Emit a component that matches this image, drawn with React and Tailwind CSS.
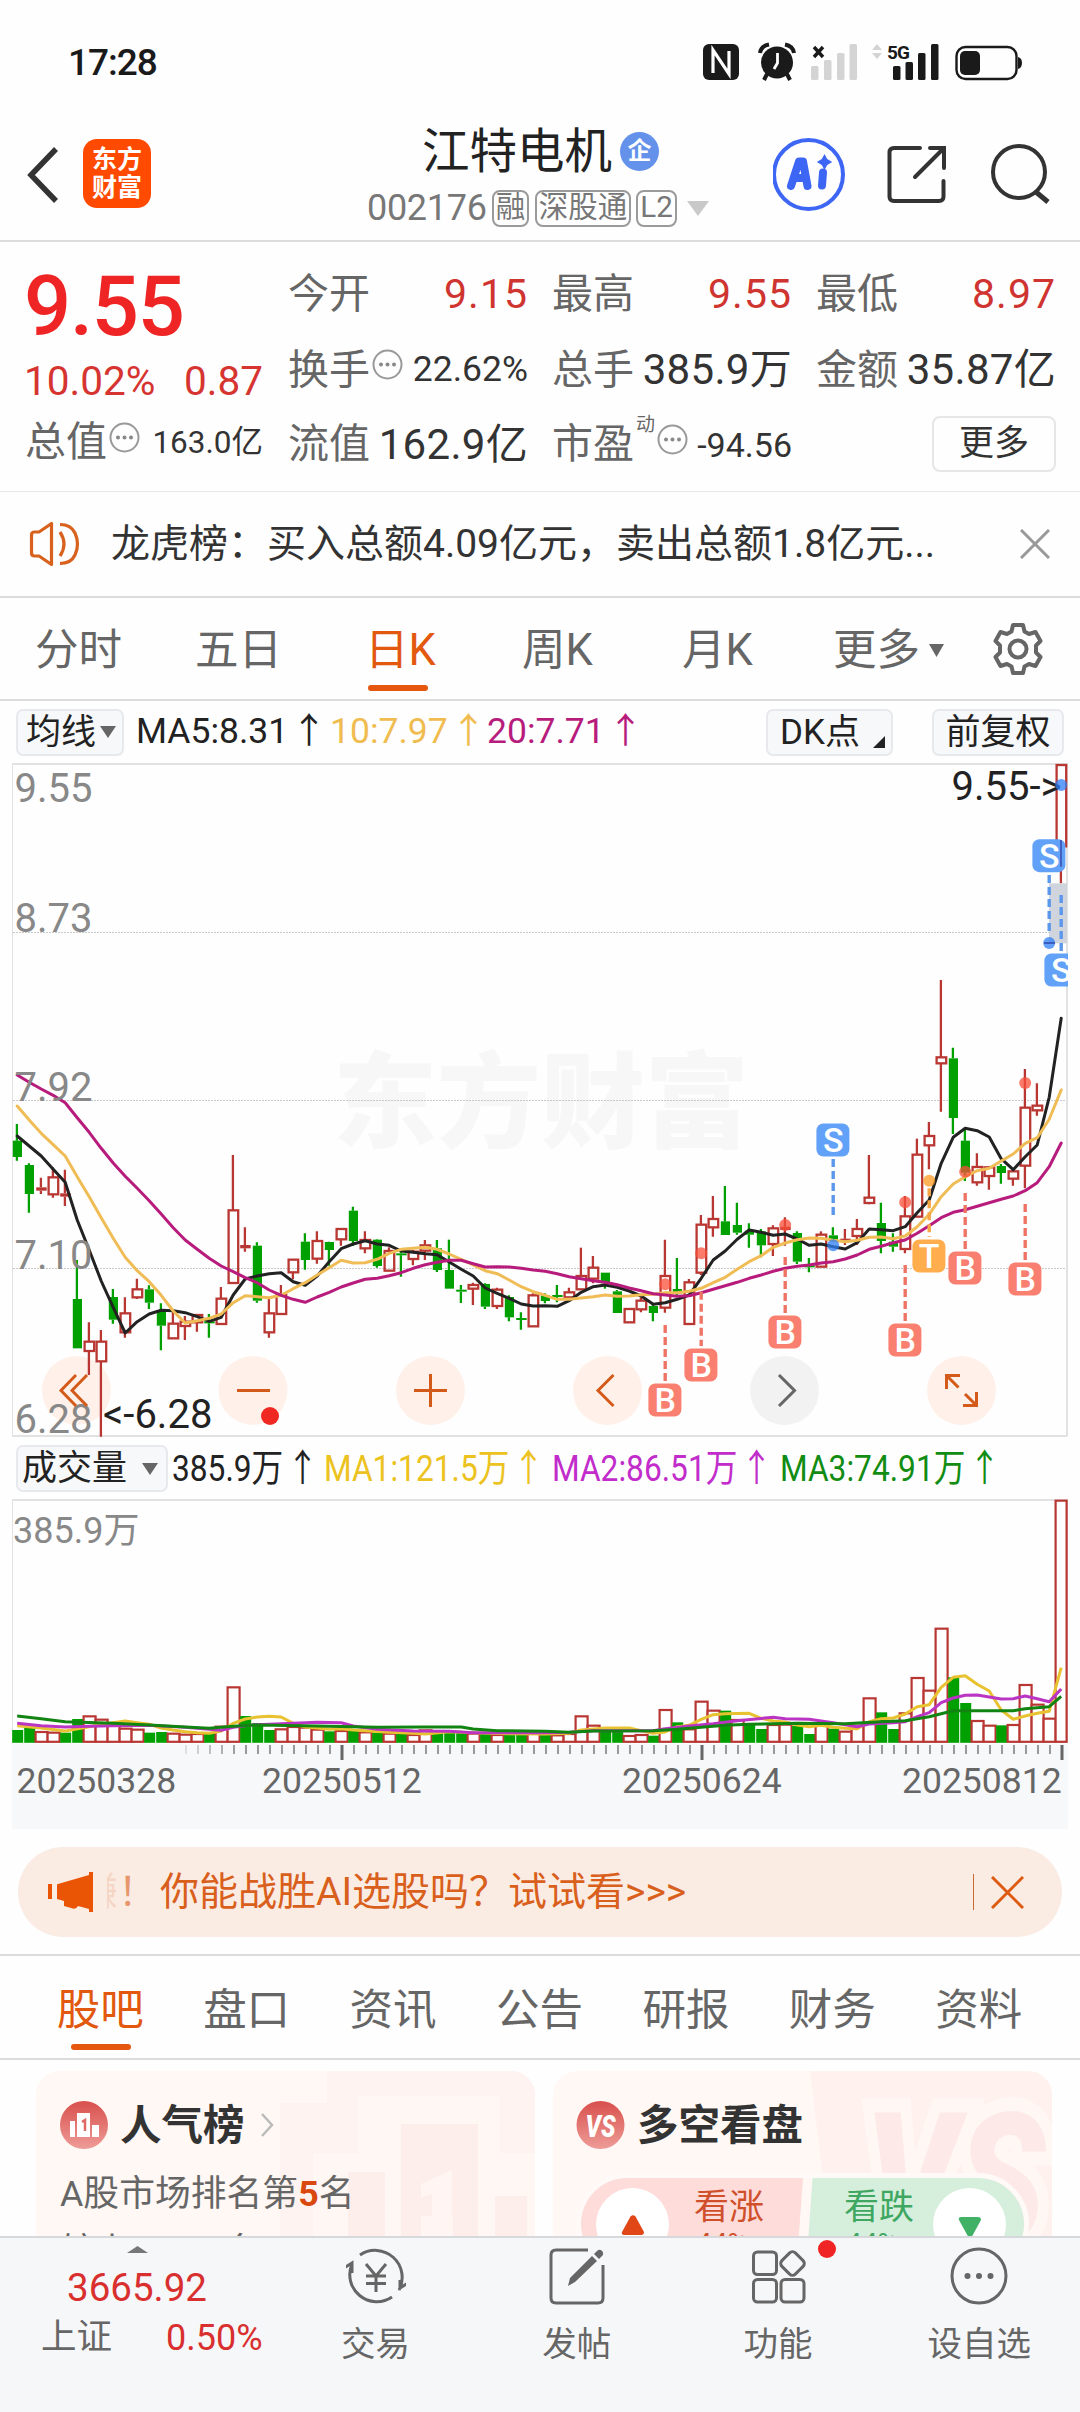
import React from "react";

const STEP = 12;
const X0 = 17.2;
const px = (i) => X0 + STEP * i;

// [kind, high, bodyTop, bodyBottom, low], values in thirds of a pixel
const CANDLES = [
  ["g",192,242,291,302],["g",310,315,402,458],["r",353,382,392,402],["r",322,352,403,413],["r",329,400,410,438],
  ["g",600,717,865,865],["r",787,845,873,945],["r",810,845,904,1130],["g",687,711,779,791],["r",712,760,817,833],
  ["r",656,688,712,717],["g",676,688,728,747],["g",730,750,797,871],["r",756,791,835,835],["r",768,785,798,840],
  ["r",762,765,787,815],["g",762,784,790,833],["r",681,716,792,792],["r",285,451,669,669],["r",502,555,565,575],
  ["g",547,557,722,728],["r",717,760,817,833],["r",675,705,762,762],["r",597,599,637,658],["g",520,545,600,629],
  ["r",514,543,596,611],["g",545,546,570,617],["r",505,507,538,557],["g",440,452,543,558],["r",514,540,565,580],
  ["g",538,539,618,623],["r",562,573,632,632],["g",568,580,586,650],["r",570,575,597,616],["r",540,556,572,600],
  ["g",540,565,630,636],["g",539,630,686,686],["g",675,689,695,729],["r",668,675,686,735],["g",670,672,740,747],
  ["r",683,689,738,747],["g",706,711,772,784],["g",757,774,780,809],["r",700,706,799,799],["g",700,706,723,730],
  ["g",675,705,711,727],["r",683,697,712,718],["r",563,648,688,688],["r",588,623,656,670],["g",638,638,670,686],
  ["g",690,694,759,759],["r",745,747,787,787],["r",712,722,748,757],["g",735,738,759,784],["r",539,648,743,758],
  ["g",594,687,700,706],["r",657,667,792,792],["r",465,494,638,645],["r",408,477,502,530],["g",378,484,525,525],
  ["g",428,495,518,524],["g",490,512,524,563],["g",507,514,556,592],["r",496,505,552,588],["r",472,500,510,557],
  ["g",514,519,605,612],["g",594,616,622,637],["r",514,524,620,620],["g",502,526,538,545],["r",507,536,542,555],
  ["r",477,507,528,555],["r",285,413,429,433],["g",428,489,543,580],["g",520,545,560,575],["r",408,469,567,580],
  ["r",236,284,470,470],["r",186,228,256,328],["r",-240,-8,10,155],["g",-37,-5,174,222],["g",210,242,338,363],
  ["r",280,321,367,377],["r",318,322,348,389],["g",312,318,339,371],["r",325,334,356,377],["r",27,143,317,385],
  ["r",70,137,151,167],null,["r",-885,-885,-641,-530],
];

const MA5 = [228,258,288,328,367,480,570,663,742,819,785,762,751,752,758,770,784,772,705,657,648,641,638,665,676,648,605,566,552,542,552,556,573,577,581,584,606,628,648,684,700,715,732,738,737,739,722,697,680,675,682,693,708,733,728,718,705,655,600,573,538,510,517,526,522,537,556,552,560,567,548,507,509,512,500,458,420,310,232,205,212,231,296,329,290,255,112,-125];
const MA10 = [138,180,220,254,288,350,410,473,535,592,632,665,706,753,789,782,775,762,728,707,710,713,706,686,668,645,623,601,609,608,598,580,568,565,562,568,582,598,615,632,641,660,680,695,706,718,718,714,710,705,709,708,704,703,698,698,694,685,668,652,628,605,587,562,549,539,534,535,541,545,541,532,531,536,528,500,463,410,372,350,332,325,303,282,250,233,178,90];
const MA20 = [45,67,87,106,128,173,217,265,309,349,385,422,462,503,540,568,595,618,635,653,668,690,706,718,727,711,697,681,669,658,655,647,638,625,614,607,601,601,611,621,620,621,625,630,634,641,650,656,662,667,674,684,692,701,705,709,707,698,688,677,667,655,645,634,625,619,615,609,605,597,585,568,559,548,540,520,497,473,457,449,439,428,418,408,392,368,320,249];

const VOL_TOP = [870,864,876,878,878,837,829,839,855,866,869,878,876,881,884,882,878,860,742,828,849,870,868,861,863,869,874,873,873,877,878,881,882,885,871,877,870,877,881,880,885,884,884,881,885,886,882,829,857,875,876,888,885,887,810,847,868,785,812,812,840,851,867,855,854,858,882,850,866,875,850,775,817,867,820,714,752,566,712,789,843,857,856,855,735,794,836,182];
// Bar colours, ten trading days to a group
const VOL_KIND = [
  "ggrrggrrrr",
  "rggrrrgrrg",
  "ggrrrrgrgr",
  "grgrrgggrg",
  "rggrgrrrrg",
  "grrgrgrrrg",
  "rggrrggrgr",
  "rrggrrrrgg",
  "rrgrrrrr",
].join("");

const V_YELLOW = [[0,857],[2,864],[4,873],[6,860],[7,853],[8,848],[9,843],[10,848],[11,853],[12,864],[13,870],[14,875],[15,878],[16,880],[17,873],[18,850],[19,837],[20,831],[21,829],[22,831],[23,850],[24,861],[25,864],[26,868],[27,866],[28,870],[29,872],[31,877],[33,880],[34,882],[36,875],[38,878],[41,881],[44,882],[46,880],[47,870],[49,864],[51,864],[52,872],[53,880],[54,876],[55,860],[56,856],[57,838],[58,824],[59,821],[61,820],[62,835],[63,843],[64,846],[65,855],[66,860],[67,856],[68,862],[69,865],[70,866],[71,845],[72,836],[73,834],[74,822],[75,800],[76,794],[77,742],[78,712],[79,707],[80,733],[81,753],[82,810],[83,838],[84,828],[85,820],[86,814],[87,683]];
const V_PURPLE = [[0,850],[2,857],[4,861],[6,859],[8,857],[11,856],[14,862],[16,868],[17,871],[18,862],[19,857],[20,854],[23,850],[25,847],[27,848],[28,858],[30,868],[33,873],[36,874],[38,878],[44,878],[46,877],[48,872],[51,872],[53,872],[54,866],[56,858],[58,851],[60,842],[63,832],[64,836],[66,838],[68,848],[70,860],[71,852],[73,848],[74,845],[75,830],[76,818],[77,788],[78,774],[79,766],[80,765],[81,771],[82,777],[83,776],[84,768],[85,776],[86,785],[87,747]];
const V_GREEN = [[0,828],[2,836],[4,845],[8,850],[11,855],[14,861],[16,865],[18,859],[20,855],[25,858],[30,862],[34,861],[37,861],[38,867],[40,872],[44,874],[46,877],[48,873],[53,872],[55,868],[57,862],[59,856],[61,853],[65,850],[69,851],[72,845],[74,842],[76,830],[78,812],[83,812],[84,806],[86,800],[87,769]];

// [index, letter, tag centre, dash start, dash end, dot, colour]
const TAGS = [
  [54,"B",1020,795,963,673,"#f97f70","#ee7566"],
  [57,"B",915,695,858,580,"#f97f70","#ee7566"],
  [64,"B",816,591,759,495,"#f97f70","#ee7566"],
  [74,"B",840,615,783,427,"#f97f70","#ee7566"],
  [76,"T",588,385,531,362,"#ffad4d","#f5a545"],
  [79,"B",624,399,567,335,"#f97f70","#ee7566"],
  [84,"B",657,432,600,69,"#f97f70","#ee7566"],
  [68,"S",240,297,465,556,"#62a1f8","#5b97ea"],
  [86,"S",-613,-555,-387,-351,"#62a1f8","#5b97ea"],
  [87,"S",-270,-495,-327,-825,"#62a1f8","#5b97ea"],
];
const DOT = { B: "#fa4f38", T: "#ff9a1f", S: "#2f7ff5" };

const RED = "#b93733";
const GREEN = "#00a000";

function PriceChart() {
  const y = (v) => v / 3 + 300;
  const line = (a) => a.map((v, i) => `${px(i).toFixed(1)},${y(v).toFixed(1)}`).join(" ");
  const buttons = [76.5, 253, 430.5, 607.5, 784.5, 961.5];
  return (
    <svg className="block" width="1080" height="680" viewBox="0 0 1080 680" fontFamily="Roboto, 'Noto Sans CJK SC', sans-serif">
      <defs>
        <clipPath id="plot"><rect x="12" y="3" width="1056" height="674" /></clipPath>
      </defs>
      <text x="333" y="380" fontSize="104" fontWeight="900" fill="#f7f7f7" fontFamily="'Noto Sans CJK SC', sans-serif">东方财富</text>
      <g stroke="#c9c9c9" strokeWidth="1" strokeDasharray="2 1">
        <path d="M13 172.5H1067M13 340.5H1067M13 508.5H1067" />
      </g>
      <g stroke="#e2e2e2" fill="none">
        <path d="M12 4H1068M12 676H1067" strokeWidth="2" />
        <path d="M12.5 4V676" strokeWidth="1" />
        <path d="M1067 4V676" strokeWidth="2" />
      </g>
      {buttons.map((x, i) => <circle key={x} cx={x} cy="630.5" r="34.5" fill={i === 4 ? "#f2f2f2" : "#fff1e9"} />)}
      <g clipPath="url(#plot)">
        {CANDLES.map((c, i) => {
          if (!c) return null;
          const [k, h, t, b, l] = c;
          const x = px(i);
          const col = k === "r" ? RED : GREEN;
          const solid = k === "g" || b - t < 11;
          return (
            <g key={i} stroke={col} strokeWidth="2.3" fill="none">
              <path d={`M${x - 0.3} ${y(h)}V${y(t)}M${x - 0.3} ${y(b)}V${y(l)}`} />
              {solid
                ? <rect x={k === "g" && b - t > 10 ? x - 4.4 : x - 5} y={y(t)} width={k === "g" && b - t > 10 ? 9.2 : 10.5} height={(b - t) / 3} fill={col} stroke="none" />
                : <rect x={x - 4.6} y={y(t)} width="9.6" height={(b - t) / 3} />}
            </g>
          );
        })}
        <rect x="1049" y={y(-530)} width="18" height="60" fill="#d0d4dc" />
        <g fill="none" strokeWidth="3" strokeLinejoin="round" strokeLinecap="round">
          <polyline points={line(MA5)} stroke="#222" />
          <polyline points={line(MA10)} stroke="#f0bc55" />
          <polyline points={line(MA20)} stroke="#b71c7c" />
        </g>
      </g>
      <g fontSize="40" fill="#888">
        <text x="14.500" y="42">9.55</text>
        <text x="14.500" y="172">8.73</text>
        <text x="14.500" y="341">7.92</text>
        <text x="14.500" y="509">7.10</text>
        <text x="14.500" y="673">6.28</text>
      </g>
      <text x="103" y="668" fontSize="40" fill="#222">&lt;-6.28</text>
      <text x="951.500" y="40" fontSize="40" fill="#222">9.55-&gt;</text>
      <g clipPath="url(#plot)">
        {TAGS.map(([i, ch, c, d0, d1, dot, col, dash]) => (
          <g key={i}>
            <path d={`M${px(i)} ${y(d0)}V${y(d1)}`} stroke={dash} strokeWidth="3.4" strokeDasharray="8 4" />
            <circle cx={px(i)} cy={y(dot)} r="6" fill={DOT[ch]} fillOpacity=".75" />
            <rect x={px(i) - 16.8} y={y(c) - 16.5} width="33" height="33" rx="7" fill={col} />
            <text x={px(i)} y={y(c) + 12} fontSize="34" fontWeight="500" textAnchor="middle" fill="#fff">{ch}</text>
          </g>
        ))}
        <path d={`M1044 ${y(-351)}H1055`} stroke="#3a5ec0" strokeWidth="2" />
        <path d={`M1061 ${y(-660)}V${y(-580)}`} stroke="#4160c0" strokeWidth="2" />
      </g>
      <g fill="none" stroke="#d45a1a" strokeWidth="3">
        <path d="M76 615L61 630.5L76 646M87 615L72 630.5L87 646" />
        <path d="M237 630.5H270" />
        <path d="M414 630.5H447M430.5 614V647" />
        <path d="M613.500 615L598 630.5L613.500 646" />
        <path d="M779 615L794.500 630.5L779 646" stroke="#666" />
        <path d="M946.500 629V615.500H960M947 616L958.500 627.500" />
        <path d="M963 645.500H976.500V632M976 645L965 634" />
      </g>
      <circle cx="270" cy="656" r="9" fill="#f02822" />
    </svg>
  );
}

function VolumeChart() {
  const y = (v) => v / 3 - 58;
  const line = (a) => a.map(([i, v]) => `${px(i).toFixed(1)},${y(v).toFixed(1)}`).join(" ");
  const base = 244.8;
  return (
    <svg className="block" width="1080" height="331" viewBox="0 0 1080 331" fontFamily="Roboto, 'Noto Sans CJK SC', sans-serif">
      <rect x="12" y="246" width="1056" height="85" fill="#f7f8fa" />
      <path d="M12 2H1068" stroke="#e2e2e2" strokeWidth="2" />
      <path d="M12.5 2V245M1067.5 2V245" stroke="#e2e2e2" />
      <text x="13" y="45" fontSize="36" fill="#888">385.9万</text>
      {VOL_TOP.map((t, i) => {
        const x = px(i);
        const top = y(t);
        return VOL_KIND[i] === "r"
          ? <rect key={i} x={x - 5.6} y={top} width={i === 87 ? 11 : 12} height={base - top - 1} fill="#fff" stroke={RED} strokeWidth="2.2" />
          : <rect key={i} x={x - 5} y={top} width="11" height={base - top} fill={GREEN} />;
      })}
      <g fill="none" strokeWidth="3" strokeLinejoin="round">
        <polyline points={line(V_YELLOW)} stroke="#e8c230" />
        <polyline points={line(V_PURPLE)} stroke="#bb35c4" />
        <polyline points={line(V_GREEN)} stroke="#128412" />
      </g>
      {Array.from({ length: 74 }, (_, k) => {
        const i = k + 14;
        const long = i === 27 || i === 57 || i === 87;
        return <path key={i} d={`M${px(i) + 0.8} 247V${long ? 262 : 256}`} stroke={long ? "#666" : "#999"} strokeWidth={long ? 3 : 2} opacity={Math.min(1, 0.25 + k * 0.17)} />;
      })}
      <g fontSize="35.500" fill="#666">
        <text x="16.500" y="295">20250328</text>
        <text x="262" y="295">20250512</text>
        <text x="622" y="295">20250624</text>
        <text x="902" y="295">20250812</text>
      </g>
    </svg>
  );
}

function StatusBar() {
  return (
    <div className="flex h-[124px] items-center justify-between pl-[68px] pr-[58px]">
      <span className="text-[37px] font-medium leading-none tracking-[-1px] text-[#1a1a1a]">17:28</span>
      <svg width="320" height="42" viewBox="702 41 320 42" fill="#1a1a1a">
        <rect x="703" y="44" width="36" height="36" rx="6" />
        <path d="M713 73V50L729 74V51" fill="none" stroke="#fff" strokeWidth="3.200" />
        <circle cx="777" cy="62.500" r="16" />
        <path d="M767 74l-3 6M787 74l3 6M760 53q1-7 9-8.500M794 53q-1-7-9-8.500" fill="none" stroke="#1a1a1a" strokeWidth="4" />
        <path d="M777.500 53V63L774 69" fill="none" stroke="#fff" strokeWidth="2.800" />
        <path d="M814 47l9 10M823 47l-9 10" stroke="#1a1a1a" strokeWidth="3.400" />
        <g fill="#d4d4d4">
          <rect x="811" y="66" width="7.500" height="14" rx="1.500" /><rect x="824" y="60" width="7.500" height="20" rx="1.500" /><rect x="837" y="53" width="7.500" height="27" rx="1.500" /><rect x="849.500" y="44" width="7.500" height="36" rx="1.500" />
          <path d="M872 50l5-6 5 6zM872 53h10l-5 6z" />
        </g>
        <text x="887" y="58.500" fontSize="19" fontWeight="700" textLength="23" fontFamily="Roboto, sans-serif">5G</text>
        <rect x="893" y="66" width="7.500" height="14" rx="1.500" /><rect x="905.500" y="62" width="7.500" height="18" rx="1.500" /><rect x="918" y="53" width="7.500" height="27" rx="1.500" /><rect x="931" y="44" width="7.500" height="36" rx="1.500" />
        <rect x="956.500" y="47" width="60" height="32" rx="9" fill="none" stroke="#1a1a1a" strokeWidth="2.400" />
        <rect x="960" y="51" width="20" height="24" rx="5" />
        <path d="M1018 57q4 1 4 6t-4 6z" />
      </svg>
    </div>
  );
}

function Header() {
  const tag = "flex h-[37px] items-center justify-center whitespace-nowrap rounded-[8px] border-2 border-[#9a9a9a] text-[29.500px] leading-none text-[#777]";
  return (
    <div className="flex h-[118px] border-b-2 border-[#dcdcdc]">
      <div className="flex w-[366px] items-start pl-[26px] pt-[15px]">
        <svg className="mt-[6px]" width="34" height="60" viewBox="0 0 34 60"><path d="M30 4L5 30L30 56" fill="none" stroke="#333" strokeWidth="5.500" /></svg>
        <div className="ml-[23px] flex h-[69px] w-[68px] flex-col items-center justify-center rounded-[14px] bg-[#ff4a00] text-[25px] font-bold leading-[28px] text-white">
          <span>东方</span><span>财富</span>
        </div>
      </div>
      <div className="w-[407px]">
        <div className="ml-[56px] flex h-[54px] items-center">
          <span className="pt-[3px] text-[47.500px] leading-none text-[#222]">江特电机</span>
          <span className="ml-[8px] flex size-[39px] items-center justify-center rounded-full bg-[#6492ea] text-[24px] font-bold leading-none text-white">企</span>
        </div>
        <div className="mt-[11px] flex h-[38px] items-center text-[#777]">
          <span className="w-[126px] pl-px text-[36px] leading-none tracking-[-0.3px]">002176</span>
          <span className={tag + " w-[37px]"}>融</span>
          <span className={tag + " ml-[6px] w-[96px]"}>深股通</span>
          <span className={tag + " ml-[5px] w-[41px]"}>L2</span>
          <svg className="ml-[10px]" width="22" height="15"><path d="M0 0H22L11 15z" fill="#c9c9c9" /></svg>
        </div>
      </div>
      <div className="pt-[12px]">
        <svg width="290" height="76" viewBox="772 136 290 76" fill="none" stroke="#333" strokeWidth="4">
          <circle cx="807.500" cy="174.500" r="34.500" stroke="#3d66f5" />
          <g stroke="#3d66f5" strokeWidth="8" strokeLinecap="round" strokeLinejoin="round">
            <path d="M790 186L798 161.500H802L806.500 186M795 178H804" /><path d="M822 172.500L821 185.500" />
          </g>
          <path d="M823.500 154l2.700 5 5 3-5 3-2.700 5-2.700-5-5-3 5-3z" fill="#3d66f5" stroke="none" />
          <path d="M919 148H893Q888.500 148 888.500 152.500V196.500Q888.500 201 893 201H938Q942.500 201 942.500 196.500V181M929 148H943V168M942 149L914 177" strokeLinecap="round" />
          <circle cx="1018" cy="172" r="26" /><path d="M1035 192L1047 202" strokeWidth="5" />
        </svg>
      </div>
    </div>
  );
}

function More() {
  return (
    <svg className="mx-[2px] shrink-0 self-start" width="31" height="31" viewBox="0 0 31 31"><circle cx="15.500" cy="15.500" r="14" fill="none" stroke="#999" strokeWidth="2" /><g fill="#888"><circle cx="9" cy="15.500" r="2" /><circle cx="15.500" cy="15.500" r="2" /><circle cx="22" cy="15.500" r="2" /></g></svg>
  );
}

function Cell({ label, value, cls, more, sup }) {
  return (
    <div className="flex items-center justify-between whitespace-nowrap pt-[2px] leading-none">
      <span className="flex h-[42px] items-center">
        <span className="text-[41px] text-[#666]">{label}</span>
        {sup && <span className="mb-[40px] ml-[2px] text-[19px] text-[#666]">{sup}</span>}
        {more && <More />}
      </span>
      <span className={cls}>{value}</span>
    </div>
  );
}

function Quote() {
  const red = "text-[41px] tracking-[1px] text-[#cf3431]";
  const dark = "text-[42px] tracking-[0.3px] text-[#333]";
  return (
    <div className="flex h-[250px] border-b border-[#e8e8e8] pl-[25px]">
      <div className="w-[238px] leading-none">
        <div className="-ml-[1px] flex h-[129px] items-center text-[83px] font-medium tracking-[-1.200px] text-[#ef2525]">9.55</div>
        <div className="flex h-[20px] items-center justify-between text-[40.500px] text-[#d63431]"><span className="-ml-[1px]">10.02%</span><span>0.87</span></div>
        <div className="grid h-[101px] items-center"><Cell label="总值" value="163.0亿" more cls="text-[31.500px] text-[#333]" /></div>
      </div>
      <div className="ml-[25px] grid w-[768px] grid-cols-[240px_240px_240px] grid-rows-[102px_50px_99px] items-center gap-x-[24px]">
        <Cell label="今开" value="9.15" cls={red} />
        <Cell label="最高" value="9.55" cls={red} />
        <Cell label="最低" value="8.97" cls={red} />
        <Cell label="换手" value="22.62%" more cls="text-[35.500px] text-[#333]" />
        <Cell label="总手" value="385.9万" cls={dark} />
        <Cell label="金额" value="35.87亿" cls={dark} />
        <Cell label="流值" value="162.9亿" cls={dark} />
        <Cell label="市盈" value="-94.56" more sup="动" cls="text-[34px] text-[#333]" />
        <div className="flex h-[56px] w-[124px] items-center justify-center justify-self-end rounded-[8px] border-2 border-[#e6e6e6] text-[35px] leading-none text-[#333]">更多</div>
      </div>
    </div>
  );
}

function Notice() {
  return (
    <div className="flex h-[106px] items-center border-b-2 border-[#dcdcdc] pl-[29px]">
      <svg width="53" height="46" viewBox="0 0 53 46" fill="none" stroke="#d8621d" strokeWidth="3.200"><path d="M2.500 14Q2.500 11 5.500 11H10L22.500 2.500V43.500L10 35H5.500Q2.500 35 2.500 32z" strokeLinejoin="round" /><path d="M31 11Q39 23 31 35M31 3.500Q42 3.500 46 12Q51 23 46 34Q42 42.500 31 42.500" /></svg>
      <span className="ml-[29px] w-[850px] whitespace-nowrap text-[39px] leading-none text-[#333]">龙虎榜：买入总额4.09亿元，卖出总额1.8亿元...</span>
      <svg className="ml-[59px]" width="30" height="30" viewBox="0 0 30 30"><path d="M1 1L29 29M29 1L1 29" stroke="#999" strokeWidth="3" /></svg>
    </div>
  );
}

function PeriodTabs() {
  return (
    <div className="flex h-[103px] items-center border-b-2 border-[#dcdcdc] pt-[4px] text-[43.500px] leading-none text-[#666]">
      <span className="ml-[35px] w-[160px]">分时</span>
      <span className="w-[170px]">五日</span>
      <span className="relative w-[157px] text-[#e2580f]">日K<i className="absolute left-[3px] top-[56px] h-[6px] w-[60px] rounded-full bg-[#e5570e]" /></span>
      <span className="w-[160px]">周K</span>
      <span className="w-[151px]">月K</span>
      <span>更多</span>
      <svg className="ml-[9px]" width="15" height="13"><path d="M0 0H15L7.500 13z" fill="#666" /></svg>
      <svg className="-mt-[4px] ml-[47px]" width="54" height="54" viewBox="0 0 54 54" fill="none" stroke="#666" strokeWidth="4" strokeLinejoin="round"><path d="M22 3H32L33.500 9.500L38 12L44.500 10L49.500 19L45 23.500V30.500L49.500 35L44.500 44L38 42L33.500 44.500L32 51H22L20.500 44.500L16 42L9.500 44L4.500 35L9 30.500V23.500L4.500 19L9.500 10L16 12L20.500 9.500z" /><circle cx="27" cy="27" r="8.500" /></svg>
    </div>
  );
}

const chip = "flex h-[47px] shrink-0 items-center rounded-[7px] border-2 border-[#e7e9ec] bg-[#f7f8fa]";

function AverageRow() {
  return (
    <div className="flex h-[59px] items-center whitespace-nowrap pl-[16px] pt-[3px] text-[35.500px] leading-none text-[#222]">
      <div className={chip + " w-[108px] pl-[8px] text-[35px]"}>均线<svg className="ml-[4px]" width="16" height="12"><path d="M0 0H16L8 12z" fill="#666" /></svg></div>
      <span className="ml-[12px] flex w-[194px]">MA5:8.31<span className="ml-[3px]">↑</span></span>
      <span className="flex w-[157px] text-[#f0bc50]">10:7.97<span className="ml-[3px]">↑</span></span>
      <span className="flex w-[279px] text-[#b71c7c]">20:7.71<span className="ml-[3px]">↑</span></span>
      <div className={chip + " w-[127px] pl-[12px] text-[35px]"}>DK点<svg className="ml-[13px] mt-[20px]" width="12" height="12"><path d="M12 0V12H0z" fill="#222" /></svg></div>
      <div className={chip + " ml-[39px] w-[132px] justify-center text-[35px]"}>前复权</div>
    </div>
  );
}

function VolumeRow() {
  const t = "flex origin-left scale-x-[0.845]";
  const a = "ml-[4px]";
  return (
    <div className="flex h-[57px] items-center whitespace-nowrap pl-[16px] pt-[2px] text-[37.500px] leading-none text-[#222]">
      <div className={chip + " w-[152px] pl-[4px] text-[35px]"}>成交量<svg className="ml-[15px]" width="16" height="12"><path d="M0 0H16L8 12z" fill="#666" /></svg></div>
      <span className="ml-[4px] w-[152px]"><span className={t}>385.9万<span className={a}>↑</span></span></span>
      <span className="w-[228px] text-[#ecc220]"><span className={t}>MA1:121.5万<span className={a}>↑</span></span></span>
      <span className="w-[228px] text-[#c12ccb]"><span className={t}>MA2:86.51万<span className={a}>↑</span></span></span>
      <span className="w-[220px] text-[#128c12]"><span className={t}>MA3:74.91万<span className={a}>↑</span></span></span>
    </div>
  );
}

function Banner() {
  return (
    <div className="mx-[18px] mt-[18px] flex h-[90px] items-center rounded-full bg-[#fbece3] pl-[30px] text-[#d95f1c]">
      <svg width="46" height="40" viewBox="0 0 46 40" fill="#e95504"><rect x="0" y="12" width="4" height="15" /><path d="M9 13Q9 12 10 12L41 3V0H45V40H41V37L30 34Q28 38 23 36L16 34V29L9 27z" /></svg>
      <span className="relative ml-[13px] h-[40px] w-[11px] overflow-hidden text-[39px] leading-[40px] opacity-15"><span className="absolute right-0">赚</span></span>
      <span className="w-[42px] text-[39px] leading-none opacity-60">！</span>
      <span className="w-[813px] whitespace-nowrap text-[39px] leading-none">你能战胜AI选股吗？试试看&gt;&gt;&gt;</span>
      <span className="h-[36px] w-px bg-[#c96a35]" />
      <svg className="ml-[17px]" width="33" height="33" viewBox="0 0 33 33"><path d="M1 1L32 32M32 1L1 32" stroke="#dd5a12" strokeWidth="3" /></svg>
    </div>
  );
}

function SectionTabs() {
  const tabs = ["股吧", "盘口", "资讯", "公告", "研报", "财务", "资料"];
  return (
    <div className="mt-[17px] grid h-[106px] grid-cols-7 items-center border-y-2 border-[#dcdcdc] pl-[27px] pr-[28px] pt-[7px] text-center text-[43.500px] leading-none text-[#666]">
      {tabs.map((t, i) => (
        <span key={t} className={i === 0 ? "relative text-[#e2580f]" : ""}>
          {t}
          {i === 0 && <i className="absolute left-[44px] top-[55px] h-[6px] w-[60px] rounded-full bg-[#e5570e]" />}
        </span>
      ))}
    </div>
  );
}

function Cards() {
  return (
    <div className="flex h-[176px] gap-[18px] overflow-hidden px-[36px] pt-[11px] leading-none">
      <div className="relative h-[240px] w-[499px] shrink-0 overflow-hidden rounded-[24px] bg-[#fff8f5] pl-[24px] pt-[30px]">
        <svg className="absolute right-0 top-0" width="260" height="240" viewBox="275 2071 260 240">
          <path d="M327 2071H535V2311H280V2103H327z" fill="#fef3f0" />
          <path d="M313 2153H358V2096H500V2153H535V2311H313z" fill="#fff7f4" />
          <path d="M401 2124H478V2311H401zM348 2172H385V2311H348zM495 2196H527V2311H495z" fill="#fdeeeb" />
          <path d="M421 2184L452 2170V2216H453V2311H421V2216H432V2194L421 2198z" fill="#fff5f2" />
        </svg>
        <div className="relative flex h-[48px] items-center">
          <svg width="48" height="48" viewBox="0 0 48 48"><defs><linearGradient id="rg" x2="0" y2="1"><stop stopColor="#d8504c" /><stop offset="1" stopColor="#ee9c98" /></linearGradient></defs><circle cx="24" cy="24" r="24" fill="url(#rg)" /><path d="M17 12H30V36H17zM10 20H15V36H10zM32 24H39V36H32z" fill="#fff" /><path d="M22 21L25 19V30" fill="none" stroke="#dd6a66" strokeWidth="2.500" /></svg>
          <span className="ml-[12px] pt-[2px] text-[41.500px] font-bold text-[#333]">人气榜</span>
          <svg className="ml-[15px]" width="15" height="26" viewBox="0 0 15 26"><path d="M2 2L12 13L2 24" fill="none" stroke="#bbb" strokeWidth="2.500" /></svg>
        </div>
        <div className="relative mt-[28px] text-[35.800px] text-[#666]">A股市场排名第<b className="text-[#d9480f]">5</b>名</div>
        <div className="relative mt-[21px] flex text-[35.500px] text-[#666]"><span className="w-[165px]">较上</span><span>名</span></div>
      </div>
      <div className="relative h-[240px] w-[499px] shrink-0 overflow-hidden rounded-[24px] bg-[#fff8f5] pl-[23px] pt-[30px]">
        <svg className="absolute right-0 top-0" width="245" height="240" viewBox="0 0 245 240">
          <path d="M3 0H245V240H32z" fill="#fef1ee" />
          <text x="58" y="172" fontSize="184" fontWeight="900" fontStyle="italic" textLength="180" lengthAdjust="spacingAndGlyphs" fill="#fdeae8" stroke="#fff7f4" strokeWidth="28" paintOrder="stroke" fontFamily="Roboto, sans-serif">VS</text>
        </svg>
        <div className="relative flex h-[48px] items-center">
          <svg width="49" height="48" viewBox="0 0 48 48"><circle cx="24" cy="24" r="24" fill="url(#rg)" /><text x="24" y="35.500" fontSize="32" fontWeight="900" fontStyle="italic" textAnchor="middle" textLength="30" lengthAdjust="spacingAndGlyphs" fill="#fff" fontFamily="Roboto, sans-serif">VS</text></svg>
          <span className="ml-[12px] pt-[2px] text-[41.500px] font-bold text-[#333]">多空看盘</span>
        </div>
        <div className="relative mt-[24px] flex h-[102px] w-[453px] rounded-full border-[5px] border-[#fffaf8]">
          <div className="flex w-[222px] rounded-l-full bg-[#fddcda] pl-[15px] pt-[10px] text-[#d0502c] [clip-path:polygon(0_0,100%_0,97%_100%,0_100%)]">
            <span className="flex size-[73px] items-center justify-center rounded-full bg-white"><svg width="24" height="20"><path d="M9.500 1.500Q12 -1 14.500 1.500L23 17Q23 20 20 20H3Q0 20 1 17z" fill="#e04616" /></svg></span>
            <span className="ml-[25px] mt-[2px] text-[35px]">看涨<span className="mt-[5px] block pl-[2px] text-[28px]">44%</span></span>
          </div>
          <div className="ml-[3px] flex flex-1 rounded-r-full bg-[#d6efdd] pl-[38px] pt-[10px] text-[#3fa761] [clip-path:polygon(3%_0,100%_0,100%_100%,0_100%)]">
            <span className="mt-[2px] text-[35px]">看跌<span className="mt-[5px] block pl-[2px] text-[28px]">44%</span></span>
            <span className="ml-[19px] flex size-[73px] items-center justify-center rounded-full bg-white pt-[5px]"><svg width="24" height="20"><path d="M9.500 18.500Q12 21 14.500 18.500L23 3Q23 0 20 0H3Q0 0 1 3z" fill="#41b265" /></svg></span>
          </div>
        </div>
      </div>
    </div>
  );
}

function NavItem({ label, dot, children }) {
  return (
    <div className="relative flex w-[201.200px] flex-col items-center pt-[8px]">
      <svg width="60" height="60" viewBox="0 0 60 60" fill="none" stroke="#666" strokeWidth="3">{children}</svg>
      <span className="mt-[21px] text-[34.500px] text-[#666]">{label}</span>
      {dot && <i className="absolute left-[141px] top-[2px] size-[18px] rounded-full bg-[#f02424]" />}
    </div>
  );
}

function BottomBar() {
  return (
    <div className="flex h-[176px] border-t-2 border-[#d6d8dc] bg-[#f6f7f9] leading-none">
      <div className="w-[275px] text-[#d92f2f]">
        <svg className="ml-[127px] mt-[8px]" width="21" height="7"><path d="M0 7L10.500 0L21 7z" fill="#777" /></svg>
        <div className="mt-[16px] pl-[67px] text-[38.500px]">3665.92</div>
        <div className="mt-[12px] flex items-center pl-[41px]"><span className="w-[125px] text-[35.500px] text-[#666]">上证</span><span className="text-[36px]">0.50%</span></div>
      </div>
      <NavItem label="交易">
        <path d="M14 9A27 27 0 0 1 53 44M46 51A27 27 0 0 1 6 18M6 27V17L-2 22M62 37L54 42V34" />
        <path d="M20 18L30 30L40 18M30 30V46M20 30H40M20 37.500H40" />
      </NavItem>
      <NavItem label="发帖">
        <path d="M41 4H9Q4 4 4 9V52Q4 57 9 57H51Q56 57 56 52V19" /><path d="M21 40L23 32L45 10L50 15L28 36z" fill="#666" stroke="none" /><path d="M47 8L52 13L55.500 9.500Q57 7 55 5Q53 3 50.500 4.500z" fill="#666" stroke="none" />
      </NavItem>
      <NavItem label="功能" dot>
        <rect x="5.500" y="6" width="23" height="22.500" rx="4" /><rect x="5.500" y="33.500" width="23" height="22.500" rx="4" /><rect x="33" y="33.500" width="23" height="22.500" rx="4" /><rect x="35" y="8" width="19" height="19" rx="4" transform="rotate(45 44.500 17.500)" />
      </NavItem>
      <NavItem label="设自选">
        <circle cx="30" cy="30" r="27" /><g fill="#666" stroke="none"><circle cx="18.500" cy="30" r="3" /><circle cx="30" cy="30" r="3" /><circle cx="41.500" cy="30" r="3" /></g>
      </NavItem>
    </div>
  );
}

export default function App() {
  return (
    <div className="flex h-[2412px] w-[1080px] flex-col overflow-hidden bg-[#fefefe] font-[Roboto,'Noto_Sans_CJK_SC',sans-serif] [&>*]:shrink-0">
      <StatusBar />
      <Header />
      <Quote />
      <Notice />
      <PeriodTabs />
      <AverageRow />
      <PriceChart />
      <div className="-mt-[1px]"><VolumeRow /></div>
      <div className="mt-[2px]"><VolumeChart /></div>
      <Banner />
      <SectionTabs />
      <Cards />
      <BottomBar />
    </div>
  );
}
